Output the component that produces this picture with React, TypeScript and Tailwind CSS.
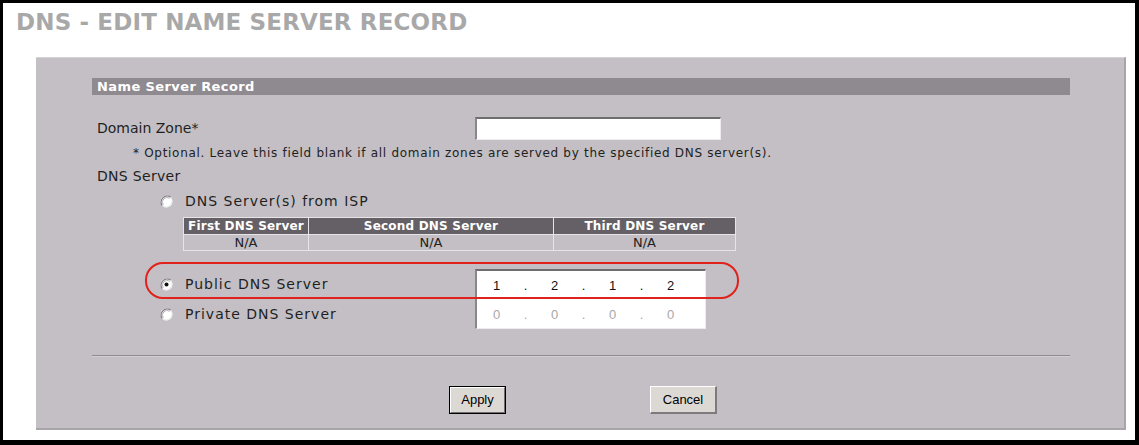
import React from "react";

const Radio = ({ checked }: { checked?: boolean }) => (
  <svg width="13" height="13" viewBox="0 0 13 13" className="shrink-0">
    <circle cx="6.5" cy="6.5" r="6" fill="#ffffff" />
    <path d="M2.3 10.7 A6 6 0 0 1 10.7 2.3" fill="none" stroke="#7f7c80" strokeWidth="1.3" />
    <path d="M3.3 9.7 A4.6 4.6 0 0 1 9.7 3.3" fill="none" stroke="#b4b1b5" strokeWidth="1" />
    <path d="M10.7 2.3 A6 6 0 0 1 2.3 10.7" fill="none" stroke="#e4e2e4" strokeWidth="1" />
    {checked && <circle cx="6.5" cy="6.5" r="2" fill="#111111" />}
  </svg>
);

const IpLine = ({ parts, muted }: { parts: string[]; muted?: boolean }) => (
  <div
    className={`flex h-[29px] items-center pl-[5px] font-['Liberation_Sans',Arial,sans-serif] text-[13px] ${
      muted ? "text-[#a9a7a9]" : "text-[#111111]"
    }`}
  >
    {parts.map((p, i) => (
      <React.Fragment key={i}>
        <span className="w-[29px] text-center">{p}</span>
        {i < parts.length - 1 && <span className="w-[29px] text-center">.</span>}
      </React.Fragment>
    ))}
  </div>
);

export default function App() {
  return (
    <div className="box-border h-[445px] w-[1139px] overflow-hidden border-t-[3px] border-l-[3px] border-r-[4px] border-b-[5px] border-black bg-white font-['DejaVu_Sans',Verdana,sans-serif] text-[#1f1f1f]">
      {/* page heading */}
      <div className="h-[54px] pl-[13px] pt-[5px]">
        <h1 className="text-[23px] font-bold leading-[28px] tracking-[0.15px] text-[#a9a8a9]">
          DNS - EDIT NAME SERVER RECORD
        </h1>
      </div>

      {/* settings panel */}
      <div className="relative ml-[33px] box-border h-[373px] w-[1090px] border-t border-r-2 border-b-2 border-t-[#d4d2d4] border-r-[#a8a5a8] border-b-[#a8a5a8] bg-[#c3bfc4] pl-[56px] pt-[20px]">
        <div className="h-[17px] w-[978px] bg-[#8f8a90] pl-[5px] text-[13px] font-bold leading-[17px] tracking-[0.4px] text-white">
          Name Server Record
        </div>

        {/* domain zone */}
        <div className="mt-[22px] flex h-[23px] items-center">
          <div className="w-[383px] pl-[5px] text-[14px]">Domain Zone*</div>
          <div className="box-border h-[23px] w-[246px] border-t-2 border-l-2 border-r border-b border-t-[#6f6d70] border-l-[#8a878a] border-r-[#ececec] border-b-[#ececec] bg-white" />
        </div>

        <div className="mt-[6px] h-[14px] pl-[41px] text-[12px] leading-[14px] tracking-[0.7px] text-[#222]">
          * Optional. Leave this field blank if all domain zones are served by the specified DNS server(s).
        </div>

        <div className="mt-[8px] h-[16px] pl-[5px] text-[14px] leading-[16px] tracking-[0.3px]">DNS Server</div>

        {/* ISP servers */}
        <div className="mt-[9px] flex h-[16px] items-center gap-[12px] pl-[68px] text-[14px] tracking-[1px]">
          <Radio />
          <span>DNS Server(s) from ISP</span>
        </div>

        <table className="ml-[91px] mt-[8px] border-collapse border border-[#e6e4e6] text-center">
          <thead>
            <tr className="h-[17px] bg-[#656066] text-[12px] font-bold leading-[15px] tracking-[0.2px] text-white">
              <th className="w-[125px] border border-[#e6e4e6] p-0">First DNS Server</th>
              <th className="w-[245px] border border-[#e6e4e6] p-0">Second DNS Server</th>
              <th className="w-[182px] border border-[#e6e4e6] p-0">Third DNS Server</th>
            </tr>
          </thead>
          <tbody>
            <tr className="h-[16px] text-[13px] leading-[14px] text-[#222]">
              <td className="border border-[#e6e4e6] p-0">N/A</td>
              <td className="border border-[#e6e4e6] p-0">N/A</td>
              <td className="border border-[#e6e4e6] p-0">N/A</td>
            </tr>
          </tbody>
        </table>

        {/* public / private server choice */}
        <div className="mt-[18px] flex">
          <div className="w-[315px] pl-[68px] text-[14px] tracking-[1px]">
            <div className="flex h-[30px] items-center gap-[12px]">
              <Radio checked />
              <span>Public DNS Server</span>
            </div>
            <div className="flex h-[30px] items-center gap-[12px]">
              <Radio />
              <span>Private DNS Server</span>
            </div>
          </div>
          <div className="ml-[68px] box-border h-[60px] w-[231px] border-t-2 border-l-2 border-r border-b border-t-[#6f6d70] border-l-[#8a878a] border-r-[#ececec] border-b-[#ececec] bg-white">
            <IpLine parts={["1", "2", "1", "2"]} />
            <IpLine parts={["0", "0", "0", "0"]} muted />
          </div>
        </div>

        <div className="mt-[26px] h-[2px] w-[978px] border-t border-b border-t-[#8e8a8f] border-b-[#d2cfd2]" />

        {/* actions */}
        <div className="mt-[29px] flex font-['Liberation_Sans',Arial,sans-serif] text-[13px] text-black">
          <div className="ml-[357px] box-border h-[28px] w-[57px] border border-black">
            <button className="box-border flex h-full w-full items-center justify-center border-t border-l border-r border-b border-t-white border-l-white border-r-[#6f6d6f] border-b-[#6f6d6f] bg-[#dcd9d5]">
              Apply
            </button>
          </div>
          <button className="ml-[144px] box-border flex h-[28px] w-[67px] items-center justify-center border-t border-l border-r-2 border-b-2 border-t-white border-l-white border-r-[#7c7a7c] border-b-[#7c7a7c] bg-[#dcd9d5]">
            Cancel
          </button>
        </div>

        {/* highlight around the selected option */}
        <div className="pointer-events-none absolute left-[109px] top-[204px] h-[37px] w-[594px] rounded-[18px] border-2 border-[#e0211c]" />
      </div>
    </div>
  );
}
